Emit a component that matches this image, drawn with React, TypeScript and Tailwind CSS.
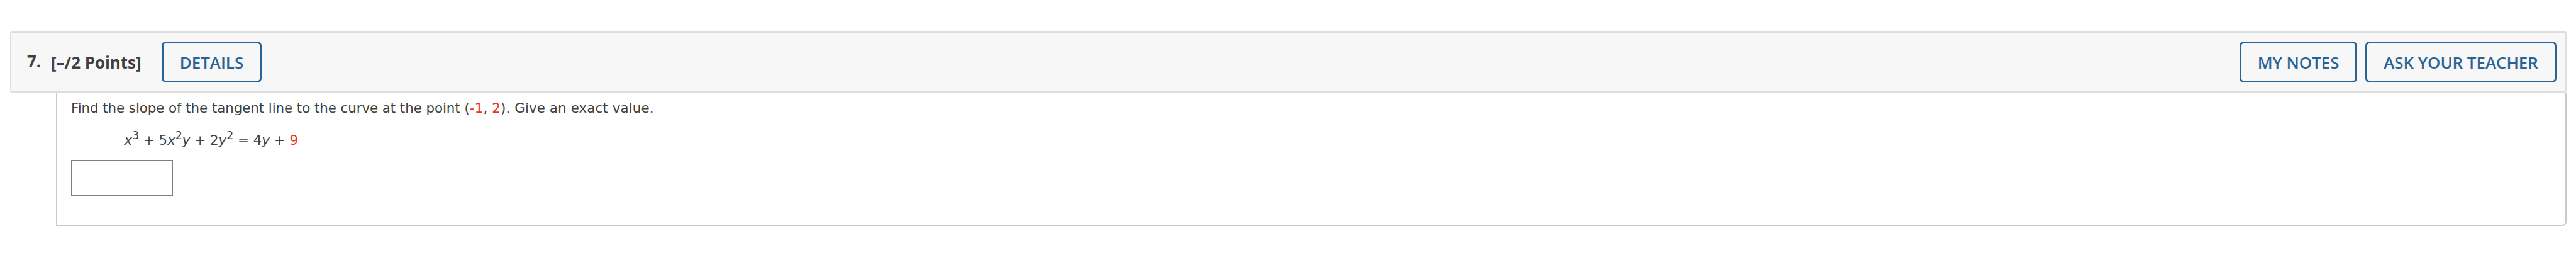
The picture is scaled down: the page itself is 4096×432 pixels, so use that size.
import type { ReactNode } from "react";

function OutlineButton({ className, children }: { className: string; children: ReactNode }) {
  return (
    <button
      type="button"
      className={`flex h-[65px] shrink-0 items-center justify-center whitespace-nowrap rounded-[6.5px] border-[3px] border-[#2a6496] text-[25.87px] leading-[36px] font-semibold text-[#2a6496] ${className}`}
    >
      {children}
    </button>
  );
}

function Sup({ children }: { children: ReactNode }) {
  return <span className="inline-block -translate-y-[9px] text-[17.3px] leading-none">{children}</span>;
}

function Red({ children }: { children: ReactNode }) {
  return <span className="text-[#eb3323]">{children}</span>;
}

export default function App() {
  return (
    <main className="h-[432px] w-[4096px] overflow-hidden bg-white pt-[50px] pl-4 text-[#404040]">
      <header className="flex h-[97px] w-[4065px] items-center rounded-[3px] border-2 border-[#dedede] bg-[#f7f7f7] pr-[14px] pl-[25px] font-['Open_Sans',sans-serif]">
        <h2 className="flex text-[25.87px] leading-[36px] font-bold whitespace-nowrap">
          <span className="-mt-[2px] w-[38px]">7.</span>
          <span className="w-[176px]">[–/2 Points]</span>
        </h2>
        <OutlineButton className="w-[159px]">DETAILS</OutlineButton>
        <div className="ml-auto flex gap-[13px]">
          <OutlineButton className="w-[187px]">MY NOTES</OutlineButton>
          <OutlineButton className="w-[304px]">ASK YOUR TEACHER</OutlineButton>
        </div>
      </header>
      <section className="ml-[73px] h-[212px] w-[3992px] rounded-br-[7px] border-x-2 border-b-2 border-[#cacaca] pt-3 pl-[22px] font-['DejaVu_Sans',sans-serif] text-[21.37px] leading-[26px]">
        <p className="whitespace-nowrap">
          <span className="tracking-[-0.06px]">Find the slope of the tangent line to the curve at the point </span>
          <span className="tracking-[0.12px]">
            (<Red>-1</Red>, <Red>2</Red>). Give an exact value.
          </span>
        </p>
        <p className="mt-[25px] ml-[84.5px] h-[26px] whitespace-nowrap">
          <i>x</i><Sup>3</Sup> + 5<i>x</i><Sup>2</Sup><i>y</i> + 2<i>y</i><Sup>2</Sup> = 4<i>y</i> + <Red>9</Red>
        </p>
        <input type="text" aria-label="Answer" className="mt-[18px] block h-[57px] w-[162px] border-2 border-[#808080] bg-white" />
      </section>
    </main>
  );
}
